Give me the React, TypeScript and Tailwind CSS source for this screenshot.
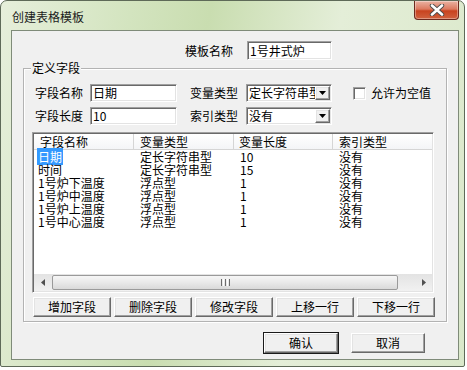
import React from 'react'

const sunken =
  'border border-t-[#a0a0a0] border-l-[#a0a0a0] border-b-white border-r-white shadow-[inset_1px_1px_0_#696969,inset_-1px_-1px_0_#e3e3e3] bg-white'
const raised =
  'bg-[#f0f0f0] border border-t-white border-l-white border-b-[#696969] border-r-[#696969] shadow-[inset_-1px_-1px_0_#a0a0a0,inset_1px_1px_0_#e3e3e3]'

const rows = [
  ['日期', '定长字符串型', '10', '没有'],
  ['时间', '定长字符串型', '15', '没有'],
  ['1号炉下温度', '浮点型', '1', '没有'],
  ['1号炉中温度', '浮点型', '1', '没有'],
  ['1号炉上温度', '浮点型', '1', '没有'],
  ['1号中心温度', '浮点型', '1', '没有'],
]

function DownArrow() {
  return (
    <svg width="7" height="4" viewBox="0 0 7 4">
      <path d="M0 0h7L3.5 4z" fill="#000" />
    </svg>
  )
}

function Combo({ value }: { value: string }) {
  return (
    <div className={`${sunken} ml-[8px] flex h-full w-[86px] items-center`}>
      <div className="flex-1 overflow-hidden whitespace-nowrap pl-[2px] leading-[16px]">{value}</div>
      <div className={`${raised} mr-[1px] flex h-[14px] w-[15px] shrink-0 items-center justify-center`}>
        <DownArrow />
      </div>
    </div>
  )
}

function Btn({ label, wide, def }: { label: string; wide?: boolean; def?: boolean }) {
  return (
    <div
      className={`${raised} ${wide ? 'w-[74px]' : 'w-[78px]'} ${def ? 'outline outline-1 outline-[#1a1a1a]' : ''} flex h-[20px] items-center justify-center leading-[16px]`}
    >
      {label}
    </div>
  )
}

export default function App() {
  return (
    <div className="h-[370px] w-[467px] bg-white font-['Noto_Sans_CJK_SC',sans-serif] text-[12px] text-black">
      <div className="flex h-[367px] w-[465px] flex-col rounded-t-[7px] rounded-b-[2px] border border-[#5e6a58] bg-[linear-gradient(100deg,#e6efdb_0%,#d3e4bf_25%,#c9ddb0_40%,#e4eed8_65%,#dae8ca_100%)]">
        {/* title bar */}
        <div className="flex h-[29px] shrink-0">
          <div className="pl-[11px] pt-[8px] text-[12px] leading-[16px] text-[#1b1b1b]">创建表格模板</div>
          <div className="ml-auto mr-[5px] flex h-[19px] w-[45px] items-center justify-center rounded-b-[4px] border border-t-0 border-[#6b2a1e] bg-[linear-gradient(180deg,#eab3a3_0%,#dc7a60_45%,#c8431f_55%,#d0623f_100%)] shadow-[inset_0_0_0_1px_rgba(255,255,255,0.35)]">
            <svg width="16" height="12" viewBox="0 0 16 12">
              <path d="M3 1.5l10 9M13 1.5l-10 9" stroke="#4a4a4a" strokeWidth="4.4" strokeLinecap="round" />
              <path d="M3 1.5l10 9M13 1.5l-10 9" stroke="#fff" strokeWidth="2.6" strokeLinecap="round" />
            </svg>
          </div>
        </div>

        {/* client area */}
        <div className="ml-[10px] flex h-[330px] w-[448px] flex-col border border-[#7f8b79] bg-[#f0f0f0]">
          <div className="mt-[10px] flex h-[19px] items-center pl-[173px]">
            <span className="leading-[16px]">模板名称</span>
            <div className={`${sunken} ml-[14px] flex h-full w-[85px] items-center pl-[2px] leading-[16px]`}>1号井式炉</div>
          </div>

          {/* group box */}
          <div className="relative ml-[11px] mt-[8px] w-[424px] border border-[#b3b3b3] shadow-[inset_1px_1px_0_#fff,1px_1px_0_#fff] pl-[8px] pt-[15px] pb-[4px]">
            <span className="absolute left-[7px] top-[-9px] bg-[#f0f0f0] px-[1px] leading-[16px]">定义字段</span>

            <div className="flex h-[18px] items-center pl-[3px]">
              <span className="w-[48px] leading-[16px]">字段名称</span>
              <div className={`${sunken} ml-[7px] flex h-full w-[87px] items-center pl-[2px] leading-[16px]`}>日期</div>
              <span className="ml-[13px] leading-[16px]">变量类型</span>
              <Combo value="定长字符串型" />
              <div className={`${sunken} ml-[21px] h-[13px] w-[13px]`} />
              <span className="ml-[5px] leading-[16px]">允许为空值</span>
            </div>
            <div className="mt-[5px] flex h-[18px] items-center pl-[3px]">
              <span className="w-[48px] leading-[16px]">字段长度</span>
              <div className={`${sunken} ml-[7px] flex h-full w-[87px] items-center pl-[2px] leading-[16px]`}>10</div>
              <span className="ml-[13px] leading-[16px]">索引类型</span>
              <Combo value="没有" />
            </div>

            {/* list view */}
            <div className={`${sunken} mt-[7px] flex h-[161px] w-[402px] flex-col p-[1px]`}>
              <div className="flex h-[16px] shrink-0 border-b border-[#d5d5d5] bg-[linear-gradient(180deg,#ffffff,#f4f5f7)] leading-[15px]">
                <div className="w-[100px] border-r border-[#d5d5d5] pl-[6px]">字段名称</div>
                <div className="w-[100px] border-r border-[#d5d5d5] pl-[6px]">变量类型</div>
                <div className="w-[99px] border-r border-[#d5d5d5] pl-[5px]">变量长度</div>
                <div className="flex-1 pl-[6px]">索引类型</div>
              </div>
              <div className="flex-1">
                {rows.map((r, i) => (
                  <div key={i} className="flex h-[13px] leading-[13px]">
                    <div className="w-[100px] pl-[3px]">
                      <span className={i === 0 ? 'bg-[#3399ff] px-[1px] text-white' : 'px-[1px]'}>{r[0]}</span>
                    </div>
                    <div className="w-[100px] pl-[6px]">{r[1]}</div>
                    <div className="w-[99px] pl-[6px]">{r[2]}</div>
                    <div className="flex-1 pl-[6px]">{r[3]}</div>
                  </div>
                ))}
              </div>
              <div className="flex h-[17px] shrink-0 bg-[linear-gradient(180deg,#e3e3e3,#f1f1f1)]">
                <div className="flex w-[17px] items-center justify-center">
                  <svg width="4" height="7" viewBox="0 0 4 7">
                    <path d="M4 0v7L0 3.5z" fill="#505050" />
                  </svg>
                </div>
                <div className="my-[1px] ml-[1px] flex w-[346px] items-center justify-center gap-[1px] rounded-[2px] border border-[#9a9a9a] bg-[linear-gradient(180deg,#f6f6f6_0%,#e9e9e9_50%,#d9d9d9_100%)]">
                  <span className="h-[7px] w-[1px] bg-[#6d6d6d]" />
                  <span className="h-[7px] w-[1px] bg-[#fff]" />
                  <span className="h-[7px] w-[1px] bg-[#6d6d6d]" />
                  <span className="h-[7px] w-[1px] bg-[#fff]" />
                  <span className="h-[7px] w-[1px] bg-[#6d6d6d]" />
                </div>
                <div className="flex-1" />
                <div className="flex w-[17px] items-center justify-center">
                  <svg width="4" height="7" viewBox="0 0 4 7">
                    <path d="M0 0v7L4 3.5z" fill="#505050" />
                  </svg>
                </div>
              </div>
            </div>

            <div className="ml-[1px] mt-[4px] flex gap-[3px]">
              <Btn label="增加字段" />
              <Btn label="删除字段" />
              <Btn label="修改字段" />
              <Btn label="上移一行" />
              <Btn label="下移一行" />
            </div>
          </div>

          <div className="mt-[11px] flex gap-[13px] pl-[252px]">
            <Btn label="确认" wide def />
            <Btn label="取消" wide />
          </div>
        </div>
      </div>
    </div>
  )
}
